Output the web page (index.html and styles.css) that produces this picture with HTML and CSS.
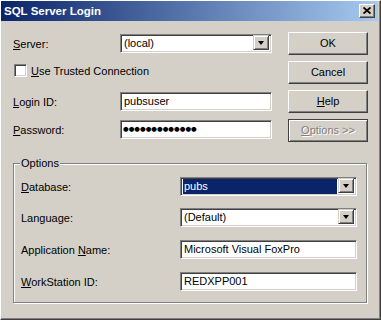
FILE: index.html
```html
<!DOCTYPE html>
<html>
<head>
<meta charset="utf-8">
<link rel="stylesheet" href="styles.css">
</head>
<body>
<div class="window">
  <div class="titlebar">
    <span class="title">SQL Server Login</span>
    <span class="close"><svg width="8" height="7" viewBox="0 0 8 7"><path d="M0.5 0.5 L7.5 6.5 M7.5 0.5 L0.5 6.5" stroke="#000" stroke-width="1.8" fill="none"/></svg></span>
  </div>
  <div class="body">
    <div class="top">
      <div class="form">
        <div class="row row-server">
          <span class="lbl"><u>S</u>erver:</span>
          <div class="combo w152"><span class="val">(local)</span><span class="drop"><i class="arrow"></i></span></div>
        </div>
        <div class="row row-check">
          <span class="checkbox"></span>
          <span class="check-label"><u>U</u>se Trusted Connection</span>
        </div>
        <div class="row row-login">
          <span class="lbl"><u>L</u>ogin ID:</span>
          <div class="field w152">pubsuser</div>
        </div>
        <div class="row row-pw">
          <span class="lbl"><u>P</u>assword:</span>
          <div class="field w152 pw">●●●●●●●●●●●●●</div>
        </div>
      </div>
      <div class="buttons">
        <div class="btn">OK</div>
        <div class="btn">Cancel</div>
        <div class="btn"><u>H</u>elp</div>
        <div class="btn btn-options"><span class="disabled"><u>O</u>ptions &gt;&gt;</span></div>
      </div>
    </div>
    <div class="group">
      <span class="legend">Options</span>
      <div class="grow">
        <span class="glbl"><u>D</u>atabase:</span>
        <div class="combo w177"><span class="val selected">pubs</span><span class="drop"><i class="arrow"></i></span></div>
      </div>
      <div class="grow">
        <span class="glbl">Language:</span>
        <div class="combo w177"><span class="val">(Default)</span><span class="drop"><i class="arrow"></i></span></div>
      </div>
      <div class="grow">
        <span class="glbl">Application <u>N</u>ame:</span>
        <div class="field w177">Microsoft Visual FoxPro</div>
      </div>
      <div class="grow">
        <span class="glbl"><u>W</u>orkStation ID:</span>
        <div class="field w177">REDXPP001</div>
      </div>
    </div>
  </div>
</div>
</body>
</html>
```
FILE: styles.css
```css
* { box-sizing: border-box; }
html, body { margin: 0; padding: 0; background: #d4d0c8; }
body { font-family: "Liberation Sans", Arial, sans-serif; font-size: 11px; color: #000; }
u { text-decoration: underline; text-underline-offset: 1px; }

.window {
  width: 381px;
  height: 320px;
  background: #d4d0c8;
  border-top: 1px solid #fff;
  border-left: 1px solid #fff;
  border-right: 1px solid #404040;
  border-bottom: 1px solid #404040;
  box-shadow: inset -1px -1px #808080;
  padding: 0 2px 2px 0;
  display: flex;
  flex-direction: column;
}

.titlebar {
  height: 20px;
  background: linear-gradient(to right, #0a246a, #a6caf0);
  display: flex;
  align-items: center;
  justify-content: space-between;
  padding: 0 3px 0 3px;
}
.title {
  color: #fff;
  font-weight: bold;
  font-size: 11.5px;
}
.close {
  width: 16px;
  height: 14px;
  background: #d4d0c8;
  border-top: 1px solid #fff;
  border-left: 1px solid #fff;
  border-right: 1px solid #404040;
  border-bottom: 1px solid #404040;
  box-shadow: inset -1px -1px #808080;
  display: flex;
  align-items: center;
  justify-content: center;
  padding-bottom: 1px;
}
.close svg { display: block; }

.body { padding: 0 0 0 12px; display: flex; flex-direction: column; }

.top { display: flex; gap: 15px; }
.form { width: 260px; display: flex; flex-direction: column; padding-top: 13px; }
.row { display: flex; align-items: center; }
.row-server { height: 19px; }
.row-check { height: 13px; margin-top: 11px; }
.row-login { height: 19px; margin-top: 15px; }
.row-pw { height: 19px; margin-top: 9px; }
.lbl { width: 107px; }

.checkbox {
  width: 13px;
  height: 13px;
  background: #fff;
  border-top: 1px solid #808080;
  border-left: 1px solid #808080;
  border-right: 1px solid #fff;
  border-bottom: 1px solid #fff;
  box-shadow: inset 1px 1px #404040, inset -1px -1px #d4d0c8;
  margin-left: 1px;
}
.check-label { margin-left: 4px; }

.field, .combo {
  height: 19px;
  background: #fff;
  border-top: 1px solid #808080;
  border-left: 1px solid #808080;
  border-right: 1px solid #fff;
  border-bottom: 1px solid #fff;
  box-shadow: inset 1px 1px #404040, inset -1px -1px #d4d0c8;
  line-height: 17px;
  padding: 0 2px 0 3px;
  white-space: nowrap;
  overflow: hidden;
}
.w152 { width: 152px; }
.w177 { width: 177px; }
.pw {
  font-family: "DejaVu Sans", sans-serif;
  font-size: 6.5px;
  letter-spacing: 0;
  padding-left: 2px;
}

.combo {
  display: flex;
  padding: 2px 2px 2px 2px;
  line-height: 13px;
}
.val { flex: 1; padding-left: 1px; }
.val.selected {
  background: #0a246a;
  color: #fff;
  margin: -1px 1px -1px 0;
  line-height: 15px;
}
.drop {
  width: 16px;
  height: 15px;
  background: #d4d0c8;
  border-top: 1px solid #d4d0c8;
  border-left: 1px solid #d4d0c8;
  border-right: 1px solid #404040;
  border-bottom: 1px solid #404040;
  box-shadow: inset 1px 1px #fff, inset -1px -1px #808080;
  display: flex;
  align-items: center;
  justify-content: center;
  margin-top: -2px;
  margin-bottom: -2px;
}
.arrow {
  width: 0;
  height: 0;
  border-left: 3.5px solid transparent;
  border-right: 3.5px solid transparent;
  border-top: 4px solid #000;
  margin-top: 1px;
}

.buttons { display: flex; flex-direction: column; gap: 6px; padding-top: 11px; }
.btn {
  width: 80px;
  height: 23px;
  background: #d4d0c8;
  border-top: 1px solid #fff;
  border-left: 1px solid #fff;
  border-right: 1px solid #404040;
  border-bottom: 1px solid #404040;
  box-shadow: inset -1px -1px #808080;
  display: flex;
  align-items: center;
  justify-content: center;
  padding-bottom: 1px;
}
.btn-options {
  border: 1px solid #404040;
  box-shadow: inset 1px 1px #fff, inset -1px -1px #808080;
}
.disabled { color: #808080; text-shadow: 1px 1px #fff; }

.group {
  position: relative;
  width: 354px;
  margin-top: 21px;
  border: 1px solid #808080;
  box-shadow: inset 1px 1px #fff, 1px 1px #fff;
  padding: 13px 0 11px 7px;
  display: flex;
  flex-direction: column;
  gap: 12px;
}
.legend {
  position: absolute;
  top: -7px;
  left: 6px;
  padding: 0 1px;
  background: #d4d0c8;
  line-height: 13px;
}
.grow { display: flex; align-items: center; height: 19px; }
.grow + .grow + .grow { margin-top: 1px; }
.glbl { width: 159px; }
```
